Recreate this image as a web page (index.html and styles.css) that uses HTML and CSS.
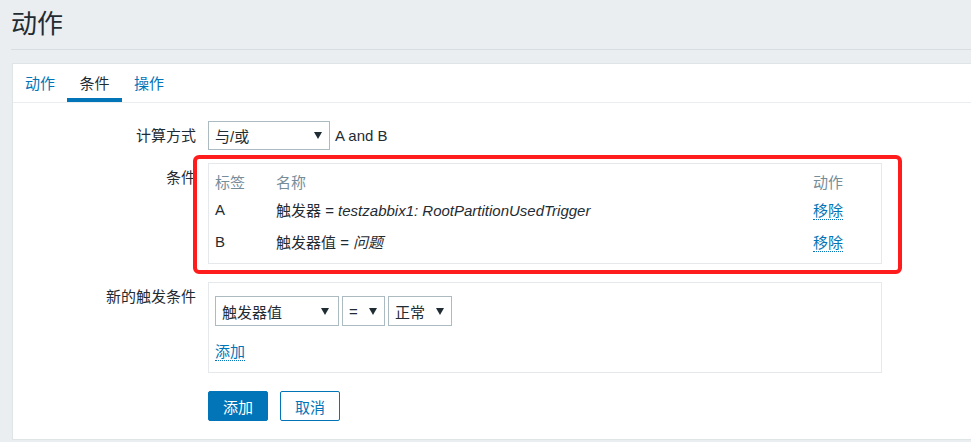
FILE: index.html
```html
<!DOCTYPE html>
<html lang="zh">
<head>
<meta charset="utf-8">
<title>动作</title>
<link rel="stylesheet" href="styles.css">
</head>
<body>
<header class="page-header">
  <h1 class="page-title">动作</h1>
</header>
<main class="panel">
  <nav class="tabs">
    <a class="tab">动作</a>
    <a class="tab tab-active">条件</a>
    <a class="tab">操作</a>
  </nav>
  <div class="form">
    <div class="row row-calc">
      <div class="lbl">计算方式</div>
      <div class="field field-inline">
        <div class="select select-calc"><span>与/或</span><span class="arrow"></span></div>
        <span class="expr">A and B</span>
      </div>
    </div>
    <div class="row row-cond">
      <div class="lbl">条件</div>
      <div class="field">
        <div class="box cond-box">
          <div class="grid-row head">
            <span>标签</span><span>名称</span><span>动作</span>
          </div>
          <div class="grid-row data">
            <span>A</span><span>触发器 = <i>testzabbix1: RootPartitionUsedTrigger</i></span><span><a class="link">移除</a></span>
          </div>
          <div class="grid-row data">
            <span>B</span><span>触发器值 = <i>问题</i></span><span><a class="link">移除</a></span>
          </div>
        </div>
      </div>
    </div>
    <div class="row row-new">
      <div class="lbl">新的触发条件</div>
      <div class="field">
        <div class="box new-box">
          <div class="selects">
            <div class="select select-type"><span>触发器值</span><span class="arrow"></span></div>
            <div class="select select-op"><span>=</span><span class="arrow"></span></div>
            <div class="select select-val"><span>正常</span><span class="arrow"></span></div>
          </div>
          <div class="add-line"><a class="link">添加</a></div>
        </div>
      </div>
    </div>
    <div class="row row-buttons">
      <div class="lbl"></div>
      <div class="field field-buttons">
        <button class="btn btn-primary">添加</button>
        <button class="btn btn-alt">取消</button>
      </div>
    </div>
  </div>
</main>
<div class="annotation"></div>
</body>
</html>
```
FILE: styles.css
```css
html, body {
  margin: 0;
  padding: 0;
}
body {
  background: #ebeef0;
  color: #1f2c33;
  font-family: "Liberation Sans", "Noto Sans CJK SC", Arial, sans-serif;
  font-size: 15px;
  overflow: hidden;
  width: 971px;
  height: 442px;
  position: relative;
}
.page-header {
  margin-left: 11px;
  height: 49px;
  border-bottom: 1px solid #d8dde1;
}
.page-title {
  margin: 0;
  font-size: 26px;
  font-weight: normal;
  line-height: 49px;
  color: #1f2c33;
}
.panel {
  margin-top: 13px;
  margin-left: 12px;
  background: #fff;
  border: 1px solid #dfe4e7;
  border-right: none;
}
.tabs {
  display: flex;
  border-bottom: 1px solid #ebeef0;
  height: 38px;
}
.tab {
  padding: 6px 12px 0;
  line-height: 28px;
  border-bottom: 4px solid transparent;
  color: #0275b8;
  cursor: pointer;
}
.tab-active {
  color: #1f2c33;
  border-bottom-color: #0275b8;
  padding: 6px 12.5px 0;
}
.form {
  padding: 18px 0 18px;
}
.row {
  display: grid;
  grid-template-columns: 183px 1fr;
  column-gap: 12px;
}
.row-new, .row-buttons {
  margin-top: 18px;
}
.row-cond {
  margin-top: 13px;
}
.lbl {
  text-align: right;
  line-height: 29px;
  white-space: nowrap;
}
.field-inline {
  display: flex;
  align-items: center;
}
.expr {
  margin-left: 5px;
}
.select {
  box-sizing: border-box;
  display: inline-flex;
  align-items: center;
  justify-content: space-between;
  height: 30px;
  padding: 0 7px 0 6px;
  border: 1px solid #acbbc2;
  background: #fff;
  color: #1f2c33;
}
.select-calc {
  width: 122px;
  height: 29px;
}
.select-type { width: 124px; padding-right: 9px; }
.select-op { width: 43px; }
.select-val { width: 64px; }
.arrow {
  width: 0;
  height: 0;
  border-left: 4px solid transparent;
  border-right: 4px solid transparent;
  border-top: 7px solid #1f2c33;
}
.box {
  box-sizing: border-box;
  width: 674px;
  border: 1px solid #e6e9eb;
}
.cond-box {
  padding: 5px 6px 6px;
}
.grid-row {
  display: grid;
  grid-template-columns: 61px 1fr 62px;
  align-items: center;
}
.head {
  height: 24px;
  color: #768d99;
}
.data {
  height: 32px;
}
.link {
  color: #0275b8;
  border-bottom: 1px dotted #0275b8;
  cursor: pointer;
}
.new-box {
  padding: 13px 6px 12px;
}
.selects {
  display: flex;
  gap: 3px;
}
.add-line {
  margin-top: 17px;
  line-height: 17px;
}
.field-buttons {
  display: flex;
  gap: 12px;
}
.btn {
  box-sizing: border-box;
  width: 60px;
  height: 30px;
  font-family: inherit;
  font-size: 15px;
  border-radius: 2px;
  border: 1px solid #0275b8;
  padding: 0;
  cursor: pointer;
}
.btn-primary {
  background: #0275b8;
  color: #fff;
}
.btn-alt {
  background: #fff;
  color: #0275b8;
}
.annotation {
  position: absolute;
  left: 193px;
  top: 155px;
  width: 709px;
  height: 119px;
  box-sizing: border-box;
  border: 4px solid #ff1c1c;
  border-radius: 6px;
  pointer-events: none;
}
```
